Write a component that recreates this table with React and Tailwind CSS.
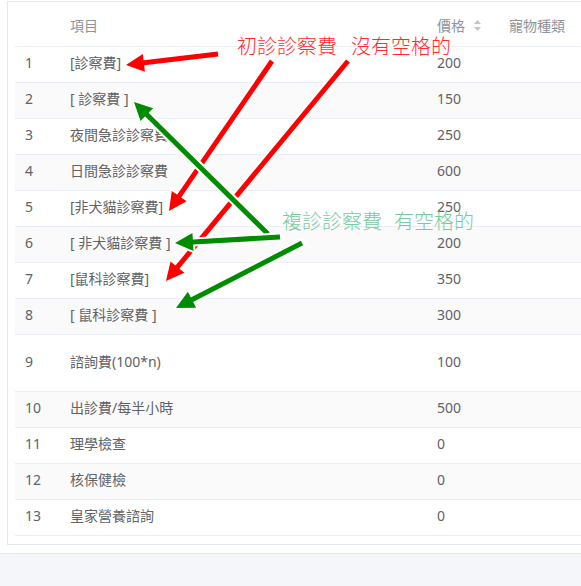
import React from "react";

const rows = [
  { no: 1, name: "[診察費]", price: 200 },
  { no: 2, name: "[ 診察費 ]", price: 150 },
  { no: 3, name: "夜間急診診察費", price: 250 },
  { no: 4, name: "日間急診診察費", price: 600 },
  { no: 5, name: "[非犬貓診察費]", price: 250 },
  { no: 6, name: "[ 非犬貓診察費 ]", price: 200 },
  { no: 7, name: "[鼠科診察費]", price: 350 },
  { no: 8, name: "[ 鼠科診察費 ]", price: 300 },
  { no: 9, name: "諮詢費(100*n)", price: 100, tall: true },
  { no: 10, name: "出診費/每半小時", price: 500 },
  { no: 11, name: "理學檢查", price: 0 },
  { no: 12, name: "核保健檢", price: 0 },
  { no: 13, name: "皇家營養諮詢", price: 0 },
];

// annotation arrows: tail -> head
const redArrows = [
  [218, 54, 126, 65],
  [272, 61, 169, 211],
  [348, 61, 166, 281],
];
const greenArrows = [
  [268, 234, 134, 102],
  [280, 237, 175, 243],
  [302, 243, 176, 308],
];

const Arrow = ({ a, color }) => {
  const [x1, y1, x2, y2] = a;
  const len = Math.hypot(x2 - x1, y2 - y1);
  const dx = (x2 - x1) / len;
  const dy = (y2 - y1) / len;
  const L = 18;
  const W = 9;
  const bx = x2 - dx * L;
  const by = y2 - dy * L;
  const pts = `${x2},${y2} ${bx - dy * W},${by + dx * W} ${bx + dy * W},${by - dx * W}`;
  const ex = x2 - dx * (L - 4);
  const ey = y2 - dy * (L - 4);
  return (
    <g>
      <line x1={x1} y1={y1} x2={ex} y2={ey} stroke="#fff" strokeWidth="9" strokeLinecap="round" />
      <polygon points={pts} fill="#fff" stroke="#fff" strokeWidth="4" strokeLinejoin="round" />
      <line x1={x1} y1={y1} x2={ex} y2={ey} stroke={color} strokeWidth="5" />
      <polygon points={pts} fill={color} />
    </g>
  );
};

const SortIcon = () => (
  <svg width="7" height="13" viewBox="0 0 7 13" className="ml-[9px]">
    <polygon points="3.5,1 7,5 0,5" fill="#c0c4cc" />
    <polygon points="0,8 7,8 3.5,12" fill="#c0c4cc" />
  </svg>
);

export default function App() {
  return (
    <div className="relative w-[581px] h-[586px] overflow-hidden bg-white font-['Noto_Sans','Noto_Sans_CJK_TC',sans-serif] text-[14px]">
      <div className="pt-px pl-[7px]">
        <div className="border border-r-0 border-[#e4e7ed] pt-[7px] pb-2 pl-[7px] overflow-hidden">
          <table className="table-fixed w-[700px] border-collapse">
            <colgroup>
              <col className="w-[45px]" />
              <col className="w-[367px]" />
              <col className="w-[72px]" />
              <col className="w-[216px]" />
            </colgroup>
            <thead>
              <tr className="h-[37px] border-b border-[#ebeef5] text-[#909399]">
                <th className="pl-[10px] pb-[3px] text-left font-normal"></th>
                <th className="pl-[10px] pb-[3px] text-left font-normal">項目</th>
                <th className="pl-[10px] pb-[3px] text-left font-normal">
                  <div className="flex items-center">
                    <span>價格</span>
                    <SortIcon />
                  </div>
                </th>
                <th className="pl-[10px] pb-[3px] text-left font-normal">寵物種類</th>
              </tr>
            </thead>
            <tbody className="text-[#606266]">
              {rows.map((r) => (
                <tr
                  key={r.no}
                  className={`border-b border-[#ebeef5] ${r.tall ? "h-[57px]" : "h-[36px]"} ${
                    r.no % 2 === 0 ? "bg-[#fafafa]" : "bg-white"
                  }`}
                >
                  <td className="pl-[10px] pb-[3px]">{r.no}</td>
                  <td className="pl-[10px] pb-[3px] whitespace-pre">{r.name}</td>
                  <td className="pl-[10px] pb-[3px]">{r.price}</td>
                  <td className="pl-[10px] pb-[3px]"></td>
                </tr>
              ))}
            </tbody>
          </table>
        </div>
      </div>
      <div className="mt-2 h-[40px] border-t border-[#e4e7ed] bg-[#f5f6fa]"></div>

      {/* annotations drawn over the table */}
      <svg className="absolute left-0 top-0 pointer-events-none" width="581" height="586">
        {redArrows.map((a, i) => (
          <Arrow key={"r" + i} a={a} color="#ff0000" />
        ))}
        {greenArrows.map((a, i) => (
          <Arrow key={"g" + i} a={a} color="#008c00" />
        ))}
      </svg>
      <div className="absolute left-[237px] top-[35px] flex text-[20px] leading-[22px] text-[#ff2b2b] font-['Noto_Sans_CJK_TC',sans-serif] font-light">
        <span>初診診察費</span>
        <span className="ml-[14px]">沒有空格的</span>
      </div>
      <div className="absolute left-[282px] top-[210px] flex text-[20px] leading-[22px] text-[#78cb9e] font-['Noto_Sans_CJK_TC',sans-serif] font-light">
        <span>複診診察費</span>
        <span className="ml-[12px]">有空格的</span>
      </div>
    </div>
  );
}
